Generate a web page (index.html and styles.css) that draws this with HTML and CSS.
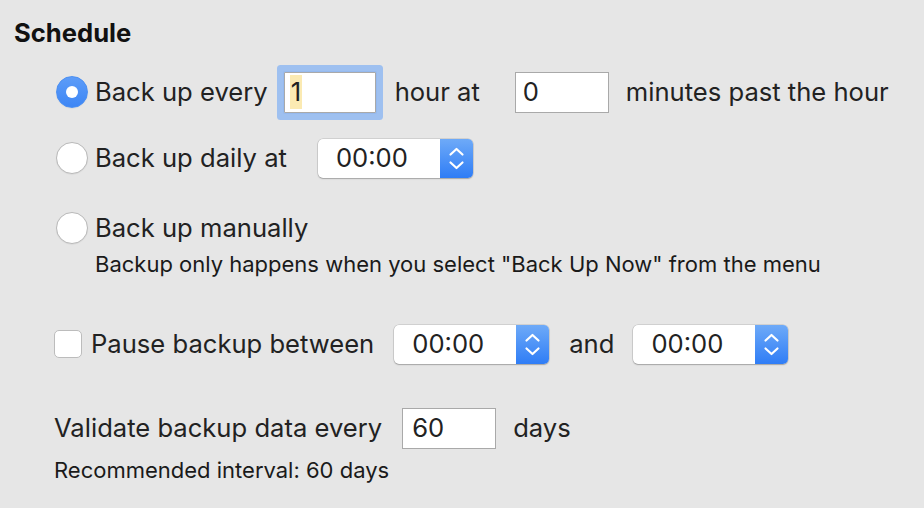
FILE: index.html
```html
<!DOCTYPE html>
<html>
<head>
<meta charset="utf-8">
<link rel="stylesheet" href="styles.css">
</head>
<body>
<div class="pane">
  <h1 class="title">Schedule</h1>

  <div class="row row-every">
    <span class="radio radio-on"></span>
    <span class="label lbl-every">Back up every</span>
    <span class="field field-focus"><span class="sel">1</span></span>
    <span class="label lbl-hour">hour at</span>
    <span class="field field-min">0</span>
    <span class="label lbl-past">minutes past the hour</span>
  </div>

  <div class="row row-daily">
    <span class="radio"></span>
    <span class="label lbl-daily">Back up daily at</span>
    <span class="popup popup-daily">
      <span class="popup-text">00:00</span>
      <span class="stepper"><svg viewBox="0 0 33 39" width="33" height="39"><path d="M10.5 15.5 L16.5 10 L22.5 15.5 M10.5 23.5 L16.5 29 L22.5 23.5" fill="none" stroke="#fff" stroke-width="2.2" stroke-linecap="round" stroke-linejoin="round"/></svg></span>
    </span>
  </div>

  <div class="row row-manual">
    <span class="radio"></span>
    <span class="label">Back up manually</span>
  </div>
  <div class="note note-manual">Backup only happens when you select "Back Up Now" from the menu</div>

  <div class="row row-pause">
    <span class="check"></span>
    <span class="label lbl-pause">Pause backup between</span>
    <span class="popup">
      <span class="popup-text">00:00</span>
      <span class="stepper"><svg viewBox="0 0 33 39" width="33" height="39"><path d="M10.5 15.5 L16.5 10 L22.5 15.5 M10.5 23.5 L16.5 29 L22.5 23.5" fill="none" stroke="#fff" stroke-width="2.2" stroke-linecap="round" stroke-linejoin="round"/></svg></span>
    </span>
    <span class="label lbl-and">and</span>
    <span class="popup">
      <span class="popup-text">00:00</span>
      <span class="stepper"><svg viewBox="0 0 33 39" width="33" height="39"><path d="M10.5 15.5 L16.5 10 L22.5 15.5 M10.5 23.5 L16.5 29 L22.5 23.5" fill="none" stroke="#fff" stroke-width="2.2" stroke-linecap="round" stroke-linejoin="round"/></svg></span>
    </span>
  </div>

  <div class="row row-validate">
    <span class="label lbl-validate">Validate backup data every</span>
    <span class="field field-days">60</span>
    <span class="label lbl-days">days</span>
  </div>
  <div class="note note-rec">Recommended interval: 60 days</div>
</div>
</body>
</html>
```

FILE: styles.css
```css
html, body {
  margin: 0;
  padding: 0;
  background: #e6e6e6;
}
body {
  width: 924px;
  height: 508px;
  overflow: hidden;
  font-family: Inter, "Noto Sans", "Liberation Sans", sans-serif;
  color: #222;
}
.pane {
  display: flex;
  flex-direction: column;
  padding: 18px 0 0 14px;
}
.title {
  margin: 0;
  height: 30px;
  line-height: 30px;
  font-size: 25.6px;
  font-weight: 700;
  color: #111;
}
.row {
  display: flex;
  align-items: center;
  font-size: 25.6px;
}
.label {
  white-space: nowrap;
  line-height: 30px;
}
.row-every {
  height: 56px;
  margin-top: 16px;
  padding-left: 42px;
}
.row-daily {
  height: 40px;
  margin-top: 18px;
  padding-left: 42px;
}
.row-manual {
  height: 40px;
  margin-top: 30px;
  padding-left: 42px;
}
.note {
  font-size: 22px;
  line-height: 24px;
  height: 24px;
  color: #1a1a1a;
}
.note-manual {
  margin-top: 4px;
  padding-left: 81px;
}
.row-pause {
  height: 40px;
  margin-top: 48px;
  padding-left: 40px;
}
.row-validate {
  height: 42px;
  margin-top: 43px;
  padding-left: 40px;
}
.note-rec {
  margin-top: 9px;
  padding-left: 40px;
}

.radio {
  flex: none;
  width: 30px;
  height: 30px;
  border-radius: 50%;
  background: #fff;
  border: 1px solid #b9b9b9;
  box-shadow: 0 0.5px 1px rgba(0,0,0,0.08);
  margin-right: 7px;
  position: relative;
}
.radio-on {
  background: linear-gradient(#5d9cf8, #3d86f5);
  border-color: #4b8ff2;
}
.radio-on::after {
  content: "";
  position: absolute;
  left: 9px;
  top: 9px;
  width: 12px;
  height: 12px;
  border-radius: 50%;
  background: #fff;
}
.check {
  flex: none;
  width: 26px;
  height: 26px;
  border-radius: 5px;
  background: #fff;
  border: 1px solid #bcbcbc;
  margin-right: 9px;
}

.field {
  flex: none;
  box-sizing: border-box;
  height: 41px;
  background: #fff;
  border: 1px solid #a9a9a9;
  display: flex;
  align-items: center;
  padding-left: 7px;
  font-size: 25.6px;
  line-height: 30px;
}
.field-focus {
  width: 92px;
  margin-left: 16px;
  box-shadow: 0 0 0 1px #95b9ee, 0 0 0 7px #9ec0f0;
  border-radius: 1px;
  padding-left: 5px;
}
.sel {
  background: #fbeab2;
  padding: 2px 1px;
  line-height: 30px;
}
.lbl-hour {
  margin-left: 19px;
}
.field-min {
  width: 94px;
  margin-left: 35px;
}
.lbl-past {
  margin-left: 17px;
}

.popup {
  flex: none;
  box-sizing: border-box;
  width: 155px;
  height: 39px;
  background: #fff;
  border-radius: 5px;
  box-shadow: 0 0 0 0.5px rgba(0,0,0,0.18), 0 1px 1.5px rgba(0,0,0,0.22);
  display: flex;
  align-items: center;
  overflow: hidden;
}
.popup-text {
  flex: 1;
  padding-left: 18px;
  font-size: 25.6px;
  line-height: 30px;
}
.stepper {
  flex: none;
  width: 33px;
  height: 39px;
  background: linear-gradient(#6eaaf8, #2f7df6);
  display: block;
}
.stepper svg {
  display: block;
}
.popup-daily {
  margin-left: 31px;
}
.lbl-pause {
  margin-right: 20px;
}
.lbl-and {
  margin: 0 19px 0 20px;
}
.field-days {
  width: 94px;
  margin-left: 20px;
  padding-left: 9px;
}
.lbl-days {
  margin-left: 17px;
}
```
